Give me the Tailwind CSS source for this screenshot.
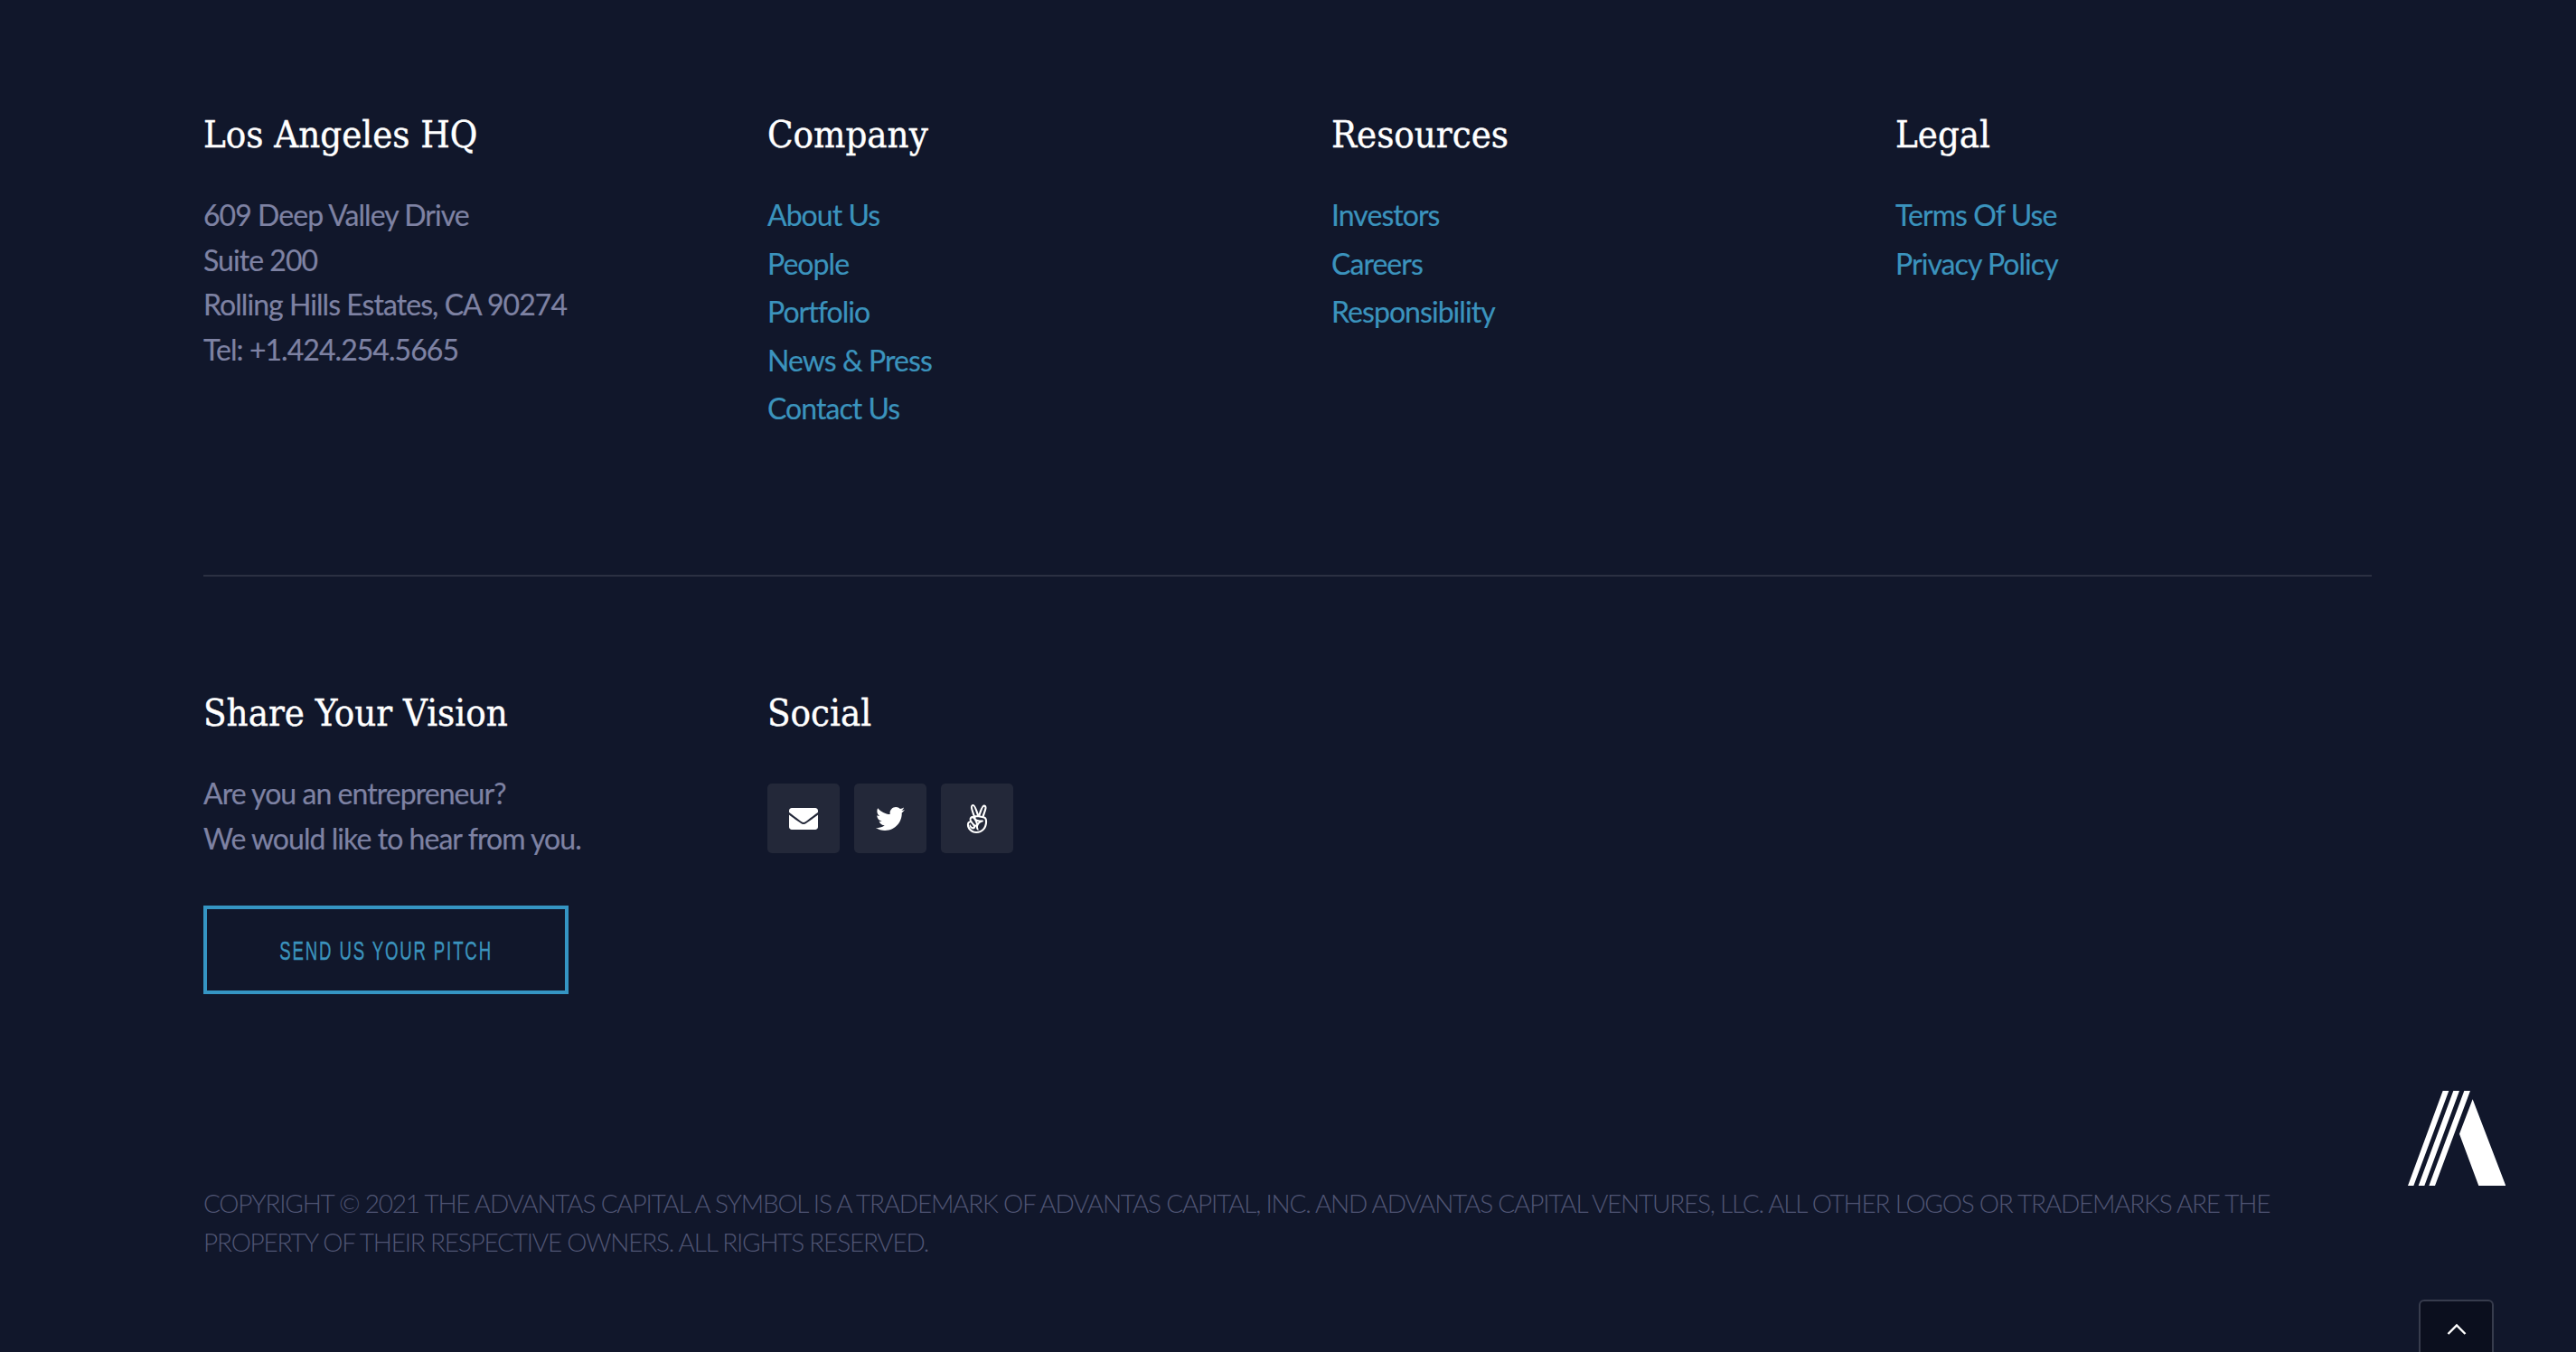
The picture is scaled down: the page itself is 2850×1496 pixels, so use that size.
<!DOCTYPE html>
<html><head><meta charset="utf-8"><script src="https://cdn.jsdelivr.net/npm/@tailwindcss/browser@4"></script></head>
<body class="bg-[#11172b]">
<footer class="relative w-[2850px] h-[1496px] overflow-hidden bg-[#11172b] font-['Lato',sans-serif] text-[32px] tracking-[-0.95px] text-[#7e82a3] [-webkit-text-stroke:0.2px_currentColor]">
  <div class="pl-[225px] pr-[226px] pt-[120px]">
    <div class="grid grid-cols-[624px_624px_624px_527px] h-[518px] border-b-2 border-[#2b3042]">
      <div>
        <h3 class="font-['DejaVu_Serif_Condensed',serif] text-[41.5px] leading-[58px] tracking-normal text-white [-webkit-text-stroke:0.4px_white]">Los Angeles HQ</h3>
        <p class="mt-[35px] leading-[49.6px]">609 Deep Valley Drive<br>Suite 200<br>Rolling Hills Estates, CA 90274<br>Tel: +1.424.254.5665</p>
      </div>
      <div>
        <h3 class="font-['DejaVu_Serif_Condensed',serif] text-[41.5px] leading-[58px] tracking-normal text-white [-webkit-text-stroke:0.4px_white]">Company</h3>
        <ul class="mt-[33px] text-[#3b93bd] leading-[53.6px]"><li>About Us</li><li>People</li><li>Portfolio</li><li>News &amp; Press</li><li>Contact Us</li></ul>
      </div>
      <div>
        <h3 class="font-['DejaVu_Serif_Condensed',serif] text-[41.5px] leading-[58px] tracking-normal text-white [-webkit-text-stroke:0.4px_white]">Resources</h3>
        <ul class="mt-[33px] text-[#3b93bd] leading-[53.6px]"><li>Investors</li><li>Careers</li><li>Responsibility</li></ul>
      </div>
      <div>
        <h3 class="font-['DejaVu_Serif_Condensed',serif] text-[41.5px] leading-[58px] tracking-normal text-white [-webkit-text-stroke:0.4px_white]">Legal</h3>
        <ul class="mt-[33px] text-[#3b93bd] leading-[53.6px]"><li>Terms Of Use</li><li>Privacy Policy</li></ul>
      </div>
    </div>
    <div class="grid grid-cols-[624px_624px] pt-[122px]">
      <div>
        <h3 class="font-['DejaVu_Serif_Condensed',serif] text-[41.5px] leading-[58px] tracking-normal text-white [-webkit-text-stroke:0.4px_white]">Share Your Vision</h3>
        <p class="mt-[35px] leading-[49.6px]">Are you an entrepreneur?<br>We would like to hear from you.</p>
        <a class="mt-[50px] flex items-center justify-center w-[404px] h-[98px] border-[4px] border-[#3595c3] overflow-hidden"><span class="shrink-0 scale-x-[0.62] font-['Liberation_Sans',sans-serif] text-[30px] tracking-[3px] text-[#3b93bd] [-webkit-text-stroke:0.4px_currentColor]">SEND US YOUR PITCH</span></a>
      </div>
      <div>
        <h3 class="font-['DejaVu_Serif_Condensed',serif] text-[41.5px] leading-[58px] tracking-normal text-white [-webkit-text-stroke:0.4px_white]">Social</h3>
        <div class="mt-[49px] flex gap-[16px]">
          <span class="flex items-center justify-center w-[80px] h-[77px] rounded-[5px] bg-[#232839]"><svg class="w-[32px] h-[32px]" viewBox="0 0 512 512" fill="#fff"><path d="M502.3 190.8c3.9-3.1 9.7-.2 9.7 4.7V400c0 26.5-21.5 48-48 48H48c-26.5 0-48-21.5-48-48V195.6c0-5 5.7-7.8 9.7-4.7 22.4 17.4 52.1 39.5 154.1 113.6 21.1 15.4 56.7 47.8 92.2 47.6 35.7.3 72-32.8 92.3-47.6 102-74.1 131.6-96.3 154-113.7zM256 320c23.2.4 56.6-29.2 73.4-41.4 132.7-96.3 142.8-104.7 173.4-128.7 5.8-4.5 9.2-11.5 9.2-18.9v-19c0-26.5-21.5-48-48-48H48C21.5 64 0 85.5 0 112v19c0 7.4 3.4 14.3 9.2 18.9 30.6 23.9 40.7 32.4 173.4 128.7 16.8 12.2 50.2 41.8 73.4 41.4z"/></svg></span>
          <span class="flex items-center justify-center w-[80px] h-[77px] rounded-[5px] bg-[#232839]"><svg class="w-[32px] h-[32px]" viewBox="0 0 512 512" fill="#fff"><path d="M459.37 151.716c.325 4.548.325 9.097.325 13.645 0 138.72-105.583 298.558-298.558 298.558-59.452 0-114.68-17.219-161.137-47.106 8.447.974 16.568 1.299 25.34 1.299 49.055 0 94.213-16.568 130.274-44.832-46.132-.975-84.792-31.188-98.112-72.772 6.498.974 12.995 1.624 19.818 1.624 9.421 0 18.843-1.3 27.614-3.573-48.081-9.747-84.143-51.98-84.143-102.985v-1.299c13.969 7.797 30.214 12.67 47.431 13.319-28.264-18.843-46.781-51.005-46.781-87.391 0-19.492 5.197-37.36 14.294-52.954 51.655 63.675 129.3 105.258 216.365 109.807-1.624-7.797-2.599-15.918-2.599-24.04 0-57.828 46.782-104.934 104.934-104.934 30.213 0 57.502 12.67 76.67 33.137 23.715-4.548 46.456-13.32 66.599-25.34-7.798 24.366-24.366 44.833-46.132 57.827 21.117-2.273 41.584-8.122 60.426-16.243-14.292 20.791-32.161 39.308-52.628 54.253z"/></svg></span>
          <span class="flex items-center justify-center w-[80px] h-[77px] rounded-[5px] bg-[#232839]"><svg class="w-[28px] h-[32px]" viewBox="0 0 448 512" fill="#fff"><path d="M347.1 215.4c11.7-32.6 45.4-126.9 45.4-157.1 0-26.6-15.7-48.9-43.7-48.9-44.6 0-84.6 131.7-97.1 163.1C242 144 196.6 0 156.6 0c-31.1 0-45.7 22.9-45.7 51.7 0 35.3 34.2 126.8 46.6 162-6.3-2.3-13.1-4.3-20-4.3-23.4 0-48.3 29.1-48.3 52.6 0 8.9 4.9 21.4 8 29.7-36.9 10-51.1 34.6-51.1 71.7C46 435.6 114.4 512 210.6 512c118 0 191.4-88.6 191.4-202.9 0-43.1-6.9-82-54.9-93.7zM311.7 108c4-12.3 21.1-64.3 37.1-64.3 8.6 0 10.9 8.9 10.9 16 0 19.4-38.7 122.6-47.4 148.1l-34.3-6 33.7-93.8zM142.3 48.3c0-11.9 14.5-45.7 46.3 47.1l34.6 100.3c-15.6-1.3-27.7-3-35.4 1.4-10.9-28.8-45.5-119.7-45.5-148.8zM140 244c29.3 0 67.1 94.6 67.1 107.4 0 5.1-4.9 11.4-10.6 11.4-20.9 0-76.9-76.9-76.9-97.7.1-7.7 12.7-21.1 20.4-21.1zm184.3 186.3c-29.1 32-66.3 48.6-109.7 48.6-59.4 0-106.3-32.6-128.9-88.3-17.1-43.4 3.8-68.3 20.6-68.3 11.4 0 54.3 60.3 54.3 73.1 0 4.9-7.7 8.3-11.7 8.3-16.1 0-22.4-15.5-51.1-51.4-29.7 29.7 20.5 86.9 58.3 86.9 26.1 0 43.1-24.2 38-42 3.7 0 8.3.3 11.7-.6 1.1 27.1 9.1 59.4 41.7 61.7 0-.9 2-7.1 2-7.4 0-17.4-10.6-32.6-10.6-50.3 0-28.3 21.7-55.7 43.7-71.7 8-6 17.7-9.7 27.1-13.1 9.7-3.7 20-8 27.4-15.4-1.1-11.2-5.7-21.1-16.9-21.1-27.7 0-120.6 4-120.6-39.7 0-6.7.1-13.1 17.4-13.1 32.3 0 114.3 8 138.3 29.1 18.1 16.1 24.3 113.2-31 174.7zm-98.6-126c9.7 3.1 19.7 4 29.7 6-7.4 5.4-14 12-20.3 19.1-2.8-8.5-6.2-16.8-9.4-25.1z"/></svg></span>
        </div>
      </div>
    </div>
    <p class="mt-[210px] w-[2320px] font-light text-[28px] leading-[43px] tracking-[-1.22px] text-[#505574] [-webkit-text-stroke:0px]">COPYRIGHT © 2021 THE ADVANTAS CAPITAL A SYMBOL IS A TRADEMARK OF ADVANTAS CAPITAL, INC. AND ADVANTAS CAPITAL VENTURES, LLC. ALL OTHER LOGOS OR TRADEMARKS ARE THE PROPERTY OF THEIR RESPECTIVE OWNERS. ALL RIGHTS RESERVED.</p>
  </div>
  <svg class="absolute left-[2664px] top-[1207px] w-[108.3px] h-[105px]" viewBox="131 82 325 315" fill="#fff"><path d="M247 82H267L150 397H131ZM282 82H302L186 397H166ZM318 82H338L221 397H201ZM346 110L456 397H366L302 225Z"/></svg>
  <div class="absolute left-[2676px] top-[1438px] w-[83px] h-[70px] bg-[#0b0f1e] border-2 border-[#373c4d] rounded-[6px]">
    <svg class="absolute left-[29px] top-[24px] w-[22px] h-[14px]" viewBox="0 0 22 14" fill="none" stroke="#fff" stroke-width="2.4"><path d="M1.5 12L11 2.5L20.5 12"/></svg>
  </div>
</footer>
</body></html>
